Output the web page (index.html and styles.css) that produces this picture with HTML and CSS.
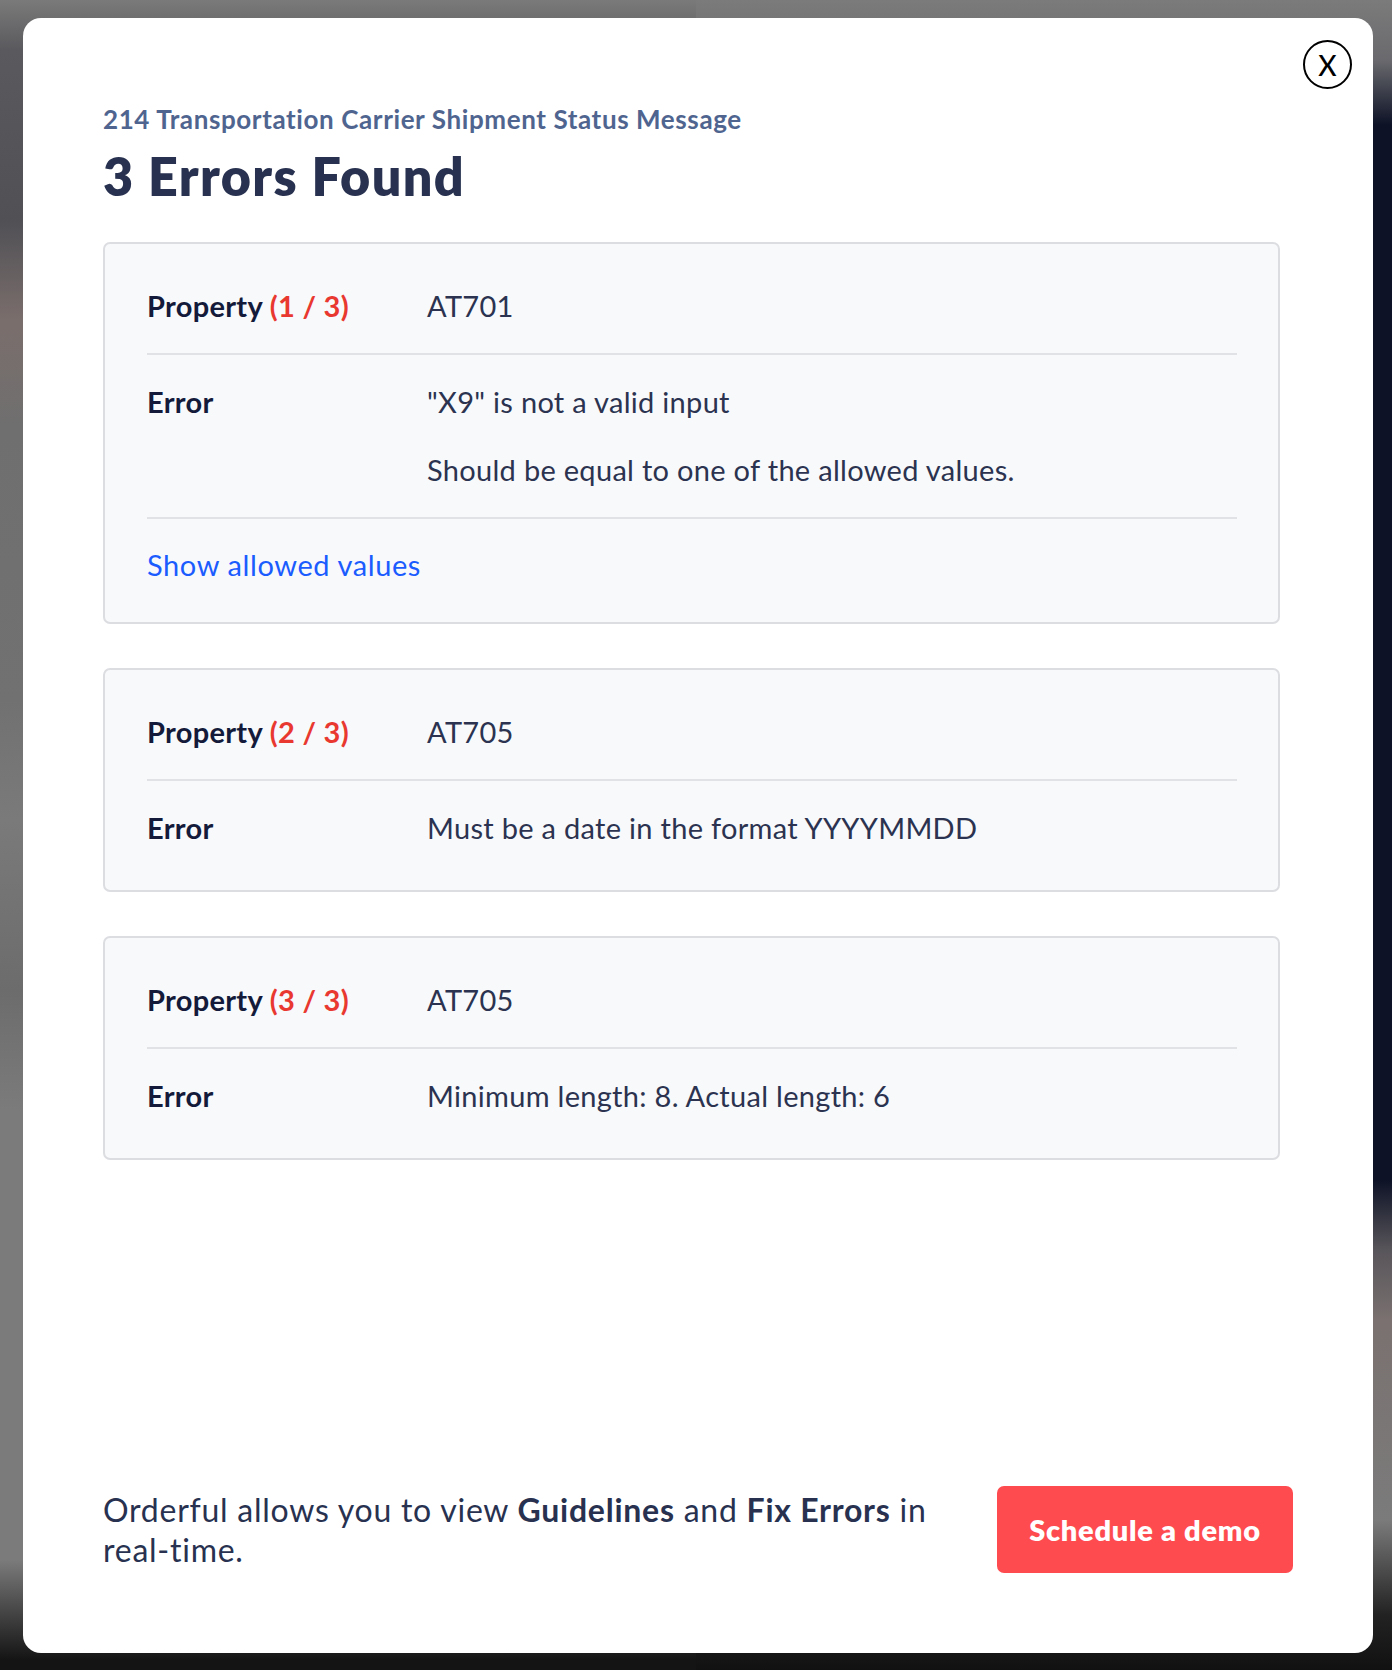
FILE: index.html
```html
<!DOCTYPE html>
<html lang="en">
<head>
<meta charset="utf-8">
<title>3 Errors Found</title>
<link rel="stylesheet" href="styles.css">
</head>
<body>
<div class="modal">
  <button class="close" type="button" aria-label="Close">X</button>
  <header class="head">
    <p class="subtitle">214 Transportation Carrier Shipment Status Message</p>
    <h1 class="title">3 Errors Found</h1>
  </header>
  <div class="cards">
    <section class="card">
      <div class="row">
        <div class="label">Property <span class="count">(1 / 3)</span></div>
        <div class="value">AT701</div>
      </div>
      <div class="row">
        <div class="label">Error</div>
        <div class="value">
          <p class="para">"X9" is not a valid input</p>
          <p class="para">Should be equal to one of the allowed values.</p>
        </div>
      </div>
      <div class="row row-link">
        <a class="link" href="#">Show allowed values</a>
      </div>
    </section>
    <section class="card">
      <div class="row">
        <div class="label">Property <span class="count">(2 / 3)</span></div>
        <div class="value">AT705</div>
      </div>
      <div class="row">
        <div class="label">Error</div>
        <div class="value">Must be a date in the format YYYYMMDD</div>
      </div>
    </section>
    <section class="card">
      <div class="row">
        <div class="label">Property <span class="count">(3 / 3)</span></div>
        <div class="value">AT705</div>
      </div>
      <div class="row">
        <div class="label">Error</div>
        <div class="value">Minimum length: 8. Actual length: 6</div>
      </div>
    </section>
  </div>
  <footer class="foot">
    <p class="pitch">Orderful allows you to view <strong>Guidelines</strong> and <strong>Fix Errors</strong> in <span class="nowrap">real-time.</span></p>
    <a class="cta" href="#">Schedule a demo</a>
  </footer>
</div>
</body>
</html>
```

FILE: styles.css
```css
* { box-sizing: border-box; }

html, body { height: 100%; }

body {
  margin: 0;
  font-family: Lato, "Noto Sans", "Liberation Sans", sans-serif;
  background:
    linear-gradient(to bottom, #7a7a7a 0, #5a5a5e 50px, #505055 220px, #7a6e6c 320px, #6f6f6f 430px, #717171 700px, #7a7a7a 820px, #6c6c6c 990px, #7b7b7b 1110px, #7b7b7b 1560px, #141414 1660px) left top / 50% 100% no-repeat,
    linear-gradient(to bottom, #7b7b7b 0, #6a6a6e 60px, #0d1226 125px, #0d1226 1180px, #58555a 1250px, #7a7170 1320px, #7b7b7b 1520px, #222 1615px, #111 1670px) right top / 50% 100% no-repeat;
  background-color: #6f6f6f;
  overflow: hidden;
}

.modal {
  position: relative;
  margin: 18px 19px 0 23px;
  height: 1635px;
  background: #fff;
  border-radius: 18px;
  padding: 85px 80px 80px 80px;
  display: flex;
  flex-direction: column;
}

.close {
  position: absolute;
  top: 22px;
  right: 21px;
  width: 49px;
  height: 49px;
  border: 2px solid #000;
  border-radius: 50%;
  background: #fff;
  color: #000;
  font-family: Lato, "Liberation Sans", sans-serif;
  font-size: 28px;
  font-weight: 500;
  line-height: 1;
  padding: 0;
  display: flex;
  align-items: center;
  justify-content: center;
  cursor: pointer;
}

.head { margin: 0; }

.subtitle {
  margin: 0;
  font-size: 26px;
  line-height: 32px;
  font-weight: 700;
  color: #4f6590;
  letter-spacing: 0.6px;
}

.title {
  margin: 13px 0 0;
  font-size: 52px;
  line-height: 56px;
  font-weight: 800;
  color: #283250;
  letter-spacing: 1.4px;
}

.cards {
  margin: 38px 13px 0 0;
  display: flex;
  flex-direction: column;
  gap: 44px;
}

.card {
  background: #f8f9fb;
  border: 2px solid #dcdde1;
  border-radius: 7px;
  padding: 15px 41px 15px 42px;
}

.row {
  display: grid;
  grid-template-columns: 280px 1fr;
  padding: 31px 0;
  border-bottom: 2px solid #e0e2e6;
  font-size: 29px;
  line-height: 32px;
  letter-spacing: 0.3px;
}

.row:last-child { border-bottom: 0; }

.row-link {
  display: block;
  padding: 30px 0 26px;
}

.label {
  font-weight: 700;
  color: #141b3a;
}

.count { color: #e8382f; }

.value { color: #2b3350; }

.para { margin: 0; }
.para + .para { margin-top: 36px; }

.link {
  color: #1b5cff;
  text-decoration: none;
  letter-spacing: 0.6px;
}

.foot {
  margin-top: auto;
  display: flex;
  align-items: center;
  justify-content: space-between;
}

.pitch {
  margin: 0;
  max-width: 860px;
  font-size: 32px;
  line-height: 40px;
  color: #283250;
  letter-spacing: 0.75px;
}

.pitch strong { font-weight: 700; }

.nowrap { white-space: nowrap; }

.cta {
  width: 296px;
  height: 87px;
  border-radius: 7px;
  background: #fe4b50;
  color: #fff;
  font-size: 29px;
  font-weight: 800;
  letter-spacing: 0.7px;
  text-decoration: none;
  display: flex;
  align-items: center;
  justify-content: center;
}
```
